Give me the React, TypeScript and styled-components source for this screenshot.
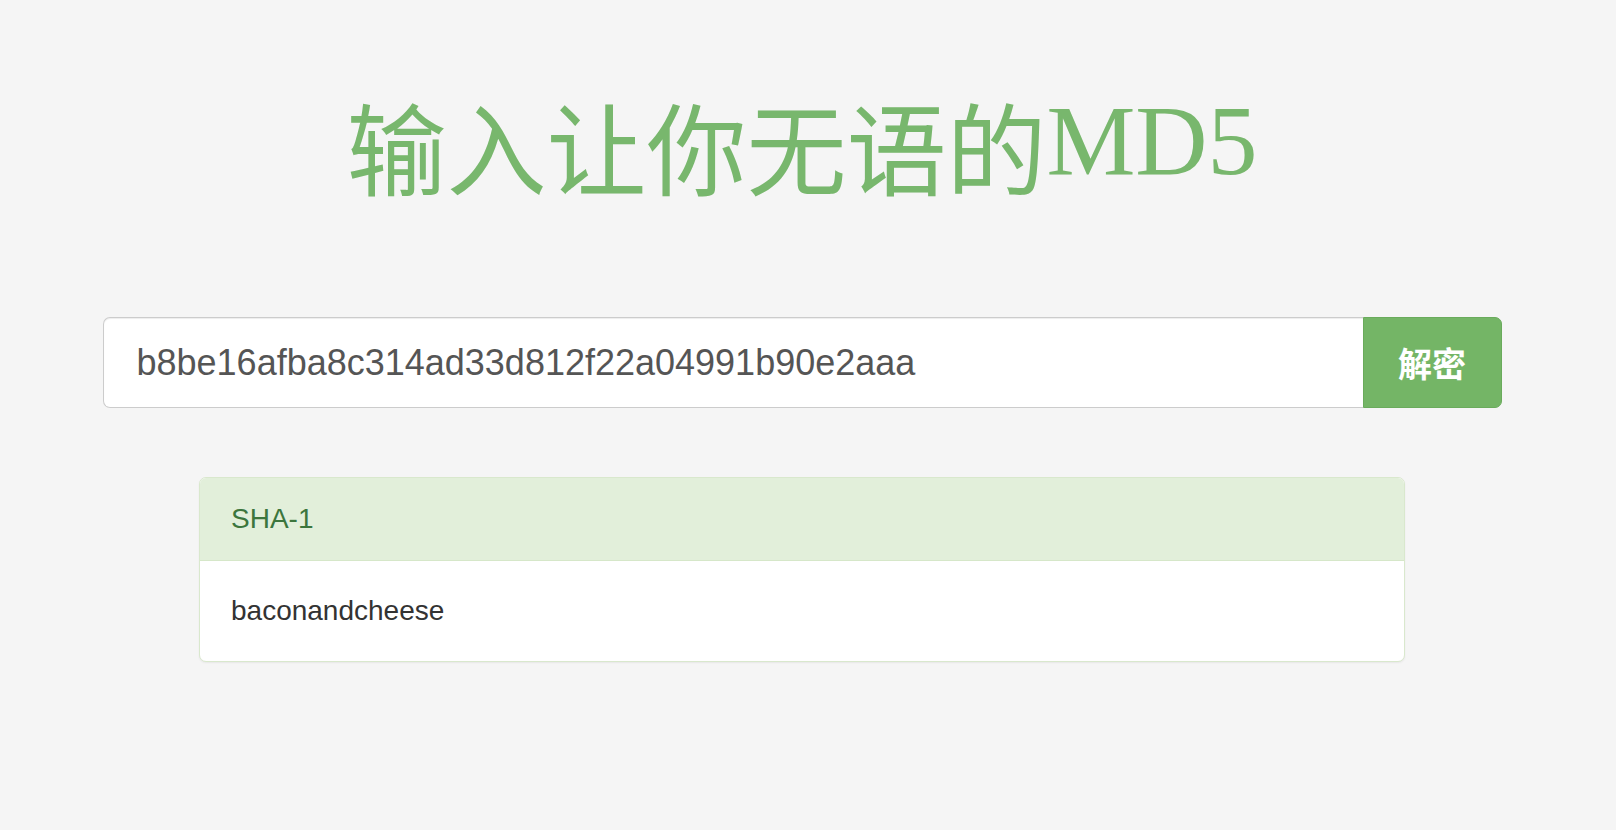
import React from "react";
import styled, { createGlobalStyle } from "styled-components";

const GlobalStyle = createGlobalStyle`
  html, body {
    margin: 0;
    padding: 0;
    background: #f5f5f5;
    font-family: "Liberation Sans", "Noto Sans CJK SC", Arial, sans-serif;
  }
  * { box-sizing: border-box; }
`;

const Page = styled.div`
  width: 1604px;
  min-height: 830px;
  display: flex;
  flex-direction: column;
  align-items: center;
`;

const Title = styled.h1`
  margin: 85px 0 0;
  font-family: "Liberation Serif", "Noto Sans CJK SC", serif;
  font-weight: 400;
  font-size: 100px;
  line-height: 140px;
  color: #78b76d;
  letter-spacing: 0;
`;

const TitleLatin = styled.span`
  line-height: 100px;
  vertical-align: 14px;
`;

const SearchGroup = styled.form`
  display: flex;
  width: 1399px;
  height: 91px;
  margin-top: 92px;
`;

const SearchInput = styled.input`
  flex: 1;
  min-width: 0;
  height: 100%;
  border: 1.5px solid #cccccc;
  border-right: none;
  border-radius: 7px 0 0 7px;
  background: #ffffff;
  padding: 0 33px;
  font-family: "Liberation Sans", Arial, sans-serif;
  font-size: 36px;
  color: #555555;
  outline: none;
  box-shadow: inset 0 1px 1px rgba(0, 0, 0, 0.075);
`;

const SubmitButton = styled.button`
  width: 139px;
  height: 100%;
  border: 1.5px solid #6aab5c;
  border-radius: 0 7px 7px 0;
  background: #74b566;
  color: #ffffff;
  font-family: "Noto Sans CJK SC", sans-serif;
  font-weight: 700;
  font-size: 34px;
  cursor: pointer;
  padding: 0;
`;

const Panel = styled.div`
  width: 1206px;
  margin-top: 69px;
  background: #ffffff;
  border: 1.5px solid #d9e8cd;
  border-radius: 7px;
  box-shadow: 0 1px 2px rgba(0, 0, 0, 0.06);
  overflow: hidden;
`;

const PanelHeading = styled.div`
  height: 83px;
  display: flex;
  align-items: center;
  padding: 0 31px;
  background: #e2efda;
  border-bottom: 1.5px solid #d6e7c9;
  color: #3c763d;
  font-size: 28px;
`;

const PanelBody = styled.div`
  height: 100px;
  display: flex;
  align-items: center;
  padding: 0 31px;
  color: #333333;
  font-size: 28px;
`;

export default function App() {
  return (
    <>
      <GlobalStyle />
      <Page>
        <Title>
          输入让你无语的<TitleLatin>MD5</TitleLatin>
        </Title>
        <SearchGroup onSubmit={(e) => e.preventDefault()}>
          <SearchInput defaultValue="b8be16afba8c314ad33d812f22a04991b90e2aaa" />
          <SubmitButton type="submit">解密</SubmitButton>
        </SearchGroup>
        <Panel>
          <PanelHeading>SHA-1</PanelHeading>
          <PanelBody>baconandcheese</PanelBody>
        </Panel>
      </Page>
    </>
  );
}
